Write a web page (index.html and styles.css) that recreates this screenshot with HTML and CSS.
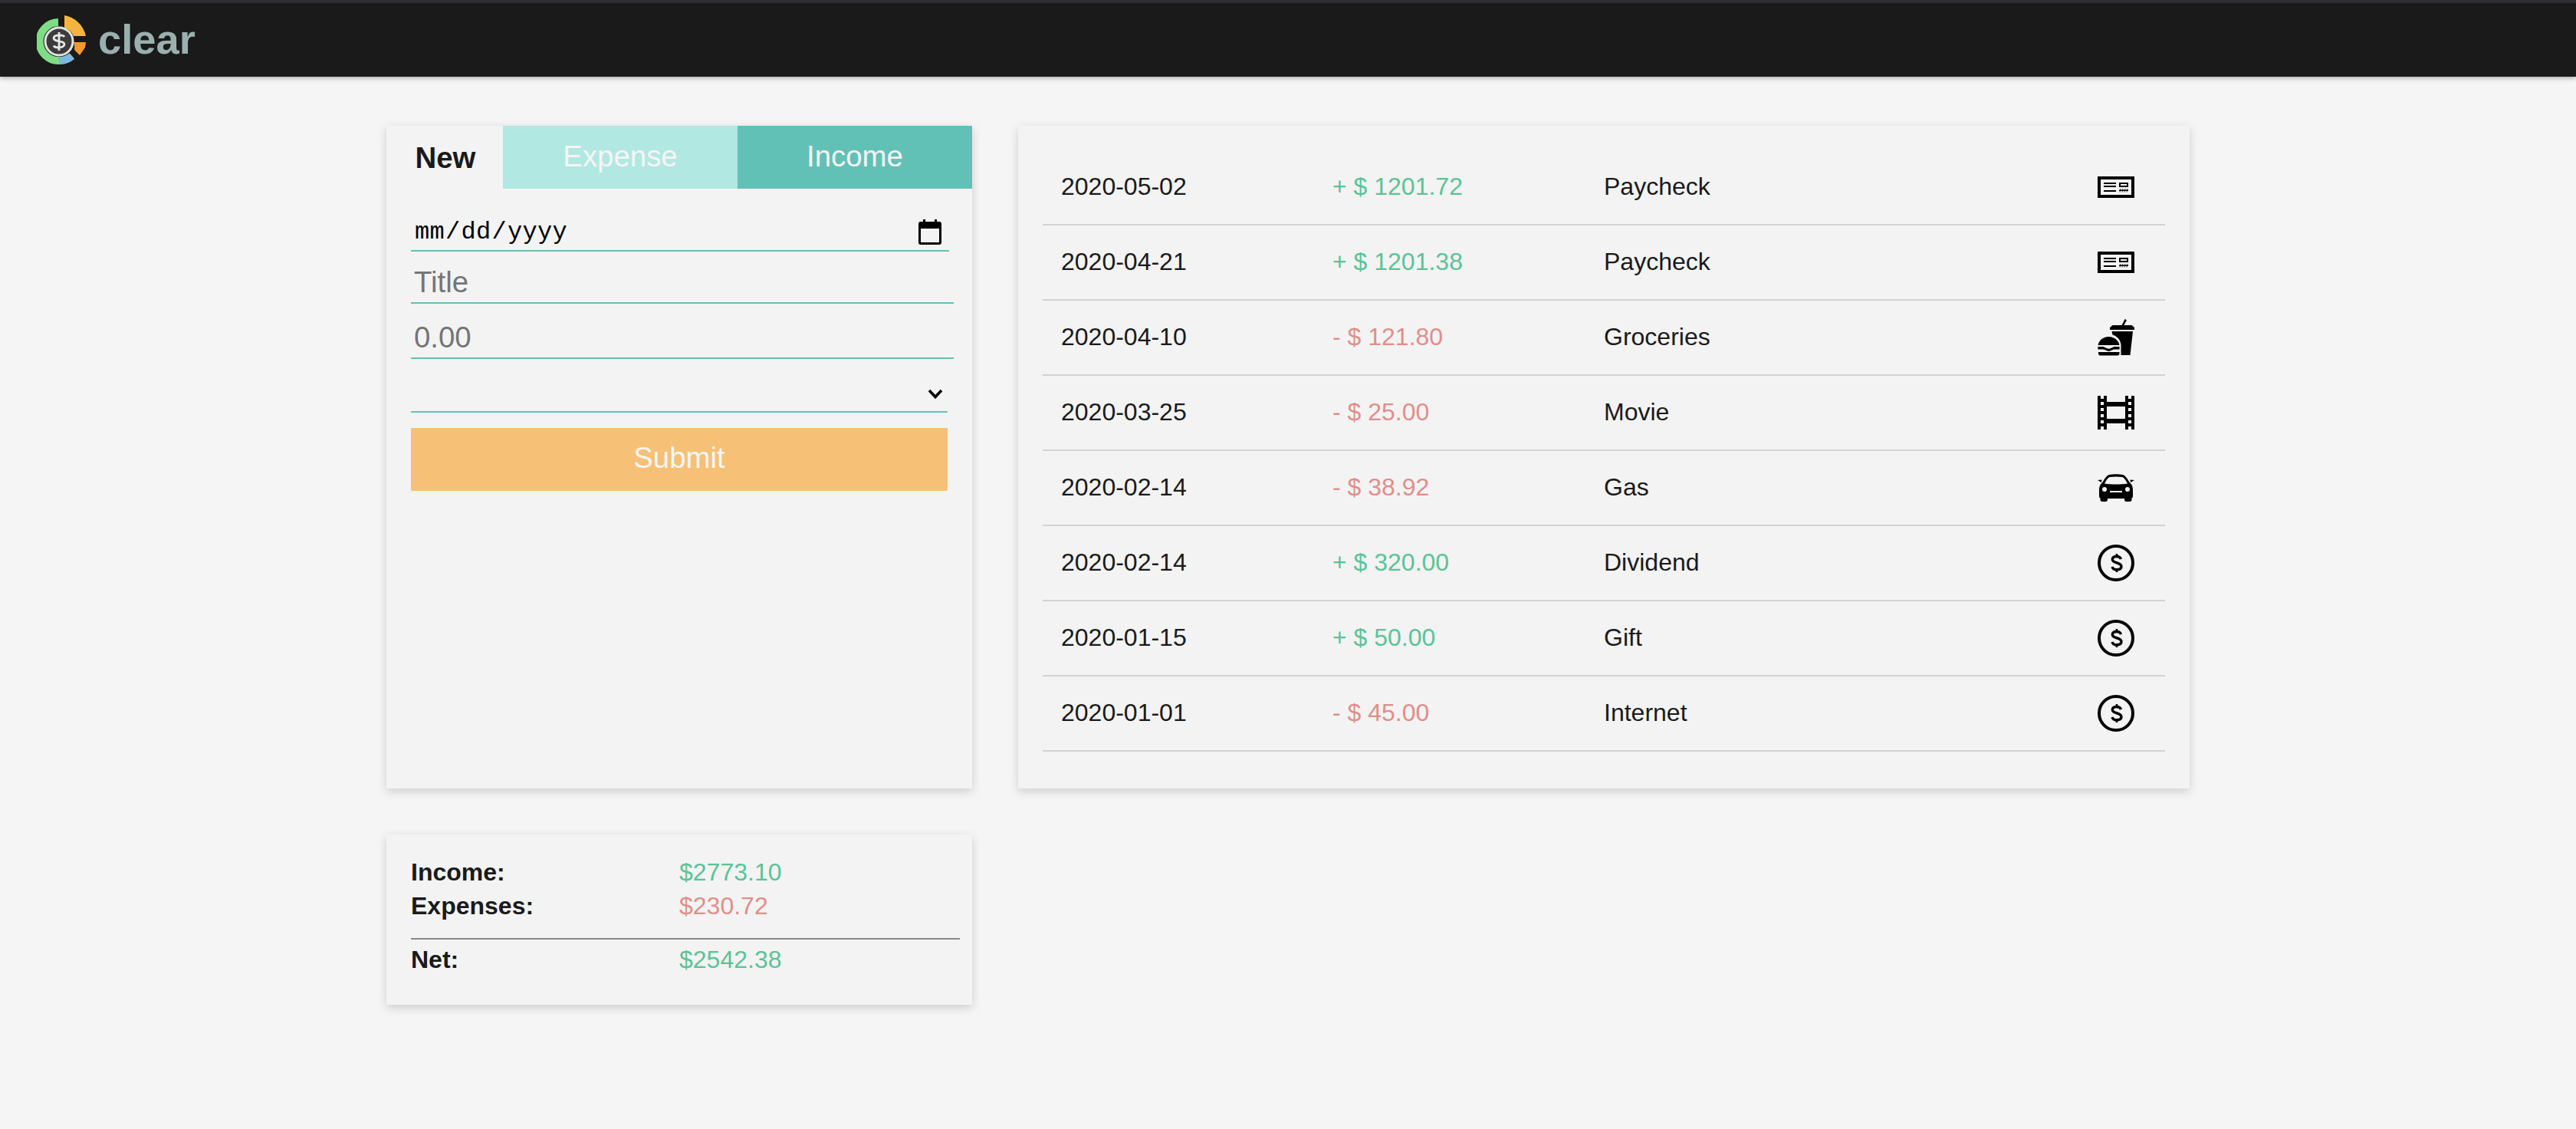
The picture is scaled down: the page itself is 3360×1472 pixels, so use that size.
FILE: index.html
```html
<!DOCTYPE html>
<html lang="en">
<head>
<meta charset="utf-8">
<title>clear</title>
<link rel="stylesheet" href="styles.css">
</head>
<body>
<svg class="sprites" width="0" height="0" aria-hidden="true">
  <symbol id="i-check" viewBox="0 0 48 28">
    <path fill-rule="evenodd" d="M0 0H48V28H0ZM4 4V24H44V4Z"/>
    <path d="M8 8H24V10H8ZM8 12H24V14H8ZM8 18H24V20H8Z"/>
    <path fill-rule="evenodd" d="M28 8H40V14H28ZM30 10V12H38V10Z"/>
    <path d="M28 17.500H40V19H28Z"/>
    <path d="M30 16L29 20.500M33 16L32 20.500M36 16L35 20.500M39 16L38 20.500" stroke="#000" stroke-width=".8" fill="none"/>
  </symbol>
  <symbol id="i-food" viewBox="0 0 48 48">
    <path d="M31.500 8L35.600 0L38 1.200L34.400 8H44.500L48 11V14H16V11L19.500 8Z"/>
    <path d="M18.500 16H46L42.500 47H30.500V38C31.500 29 27 23 19.500 20.500Z"/>
    <path d="M14.500 23C22 23 27.500 28 28.500 34H.6C1.500 28 7 23 14.500 23Z"/>
    <path d="M.4 36H7C9 36 12 38.800 14.500 38.800C17 38.800 20 36 22 36H28.600V39.500H22C19 39.500 17 42 14.500 42C12 42 10 39.500 7 39.500H.4Z"/>
    <path d="M1 43H28.500V45C28.500 46.500 27.500 47.500 26 47.500H3.500C2 47.500 1 46.500 1 45Z"/>
  </symbol>
  <symbol id="i-film" viewBox="0 0 48 44">
    <path fill-rule="evenodd" d="M0 0H4V4H8V0H12V8H36V0H40V4H44V0H48V44H44V40H40V44H36V36H12V44H8V40H4V44H0ZM4 8V12H8V8ZM4 16V20H8V16ZM4 24V28H8V24ZM4 32V36H8V32ZM40 8V12H44V8ZM40 16V20H44V16ZM40 24V28H44V24ZM40 32V36H44V32ZM12 14V30H36V14Z"/>
  </symbol>
  <symbol id="i-car" viewBox="0 0 48 36">
    <path fill-rule="evenodd" d="M15 1C20 0 28 0 33 1C36 2 39 6 41 10L44 13.500C45.500 15.500 46 18 46 21V29C46 30 45.500 31 44.500 31.500V33.500C44.500 35 43.500 36 42 36H37.500C36 36 35 35 35 33.500V32H13V33.500C13 35 12 36 10.500 36H6C4.500 36 3.500 35 3.500 33.500V31.500C2.500 31 2 30 2 29V21C2 18 2.500 15.500 4 13.500L7 10C9 6 12 2 15 1ZM15.500 4C13 5.500 10.500 9 9 12.500C18 13.800 30 13.800 39 12.500C37.500 9 35 5.500 32.500 4C27 3.200 21 3.200 15.500 4ZM9 17A3 3 0 1 0 9 23A3 3 0 1 0 9 17ZM39 17A3 3 0 1 0 39 23A3 3 0 1 0 39 17ZM16 22V24H32V22Z"/>
    <path d="M0 8L5.500 7.500L5 11ZM48 8L42.500 7.500L43 11Z"/>
  </symbol>
  <symbol id="i-dollar" viewBox="0 0 48 48">
    <circle cx="24" cy="24" r="22" fill="none" stroke="#000" stroke-width="4"/>
    <path d="M30.500 19C29.800 16.800 27.800 15.500 25 15.500C21.500 15.500 19.300 17 19.300 19.500C19.300 25 31 22.500 31 28.600C31 31.300 28.500 32.800 25 32.800C22 32.800 19.800 31.500 19 29" fill="none" stroke="#000" stroke-width="3.400"/>
    <path d="M25 12V16M25 32V36" stroke="#000" stroke-width="2.600"/>
  </symbol>
</svg>

<header class="topbar">
  <svg class="logo" viewBox="48 20 64 64" width="64" height="64" aria-hidden="true">
    <path d="M76 29A25 25 0 0 0 77 79" fill="none" stroke="#7fdc86" stroke-width="10"/>
    <path d="M77 79A25 25 0 0 0 94 73" fill="none" stroke="#7cb9e0" stroke-width="10"/>
    <path d="M84 20A34.500 34.500 0 0 1 112 47L96 47A20 20 0 0 0 84 36Z" fill="#f4b540"/>
    <path d="M96 55L112 55L111 62L104 72L97 65Q98 60 96 55Z" fill="#f3982f"/>
    <circle cx="77" cy="54" r="18" fill="#3c3c3c" stroke="#e4e4e4" stroke-width="3"/>
    <path d="M84 48C82 45 71 45 70 49.500C70 55 84 52.500 84 58C83 63 72 63 70 59.500M77 42V66" fill="none" stroke="#e8e8e8" stroke-width="2.800"/>
  </svg>
  <span class="brand">clear</span>
</header>

<main class="layout">
  <section class="card entry">
    <div class="tabs">
      <span class="tab tab-title">New</span>
      <span class="tab tab-expense">Expense</span>
      <span class="tab tab-income">Income</span>
    </div>
    <form class="form">
      <input class="field field-date" type="date">
      <input class="field field-text" type="text" placeholder="Title">
      <input class="field field-text field-amount" type="text" placeholder="0.00">
      <select class="field field-select"><option></option></select>
      <button class="submit" type="button">Submit</button>
    </form>
  </section>

  <section class="card ledger">
    <div class="row"><span>2020-05-02</span><span class="pos">+ $ 1201.72</span><span>Paycheck</span><svg class="icon icon-check"><use href="#i-check"/></svg></div>
    <div class="row"><span>2020-04-21</span><span class="pos">+ $ 1201.38</span><span>Paycheck</span><svg class="icon icon-check"><use href="#i-check"/></svg></div>
    <div class="row"><span>2020-04-10</span><span class="neg">- $ 121.80</span><span>Groceries</span><svg class="icon icon-food"><use href="#i-food"/></svg></div>
    <div class="row"><span>2020-03-25</span><span class="neg">- $ 25.00</span><span>Movie</span><svg class="icon icon-film"><use href="#i-film"/></svg></div>
    <div class="row"><span>2020-02-14</span><span class="neg">- $ 38.92</span><span>Gas</span><svg class="icon icon-car"><use href="#i-car"/></svg></div>
    <div class="row"><span>2020-02-14</span><span class="pos">+ $ 320.00</span><span>Dividend</span><svg class="icon icon-dollar"><use href="#i-dollar"/></svg></div>
    <div class="row"><span>2020-01-15</span><span class="pos">+ $ 50.00</span><span>Gift</span><svg class="icon icon-dollar"><use href="#i-dollar"/></svg></div>
    <div class="row"><span>2020-01-01</span><span class="neg">- $ 45.00</span><span>Internet</span><svg class="icon icon-dollar"><use href="#i-dollar"/></svg></div>
  </section>

  <section class="card summary">
    <div class="sum-row"><strong>Income:</strong><span class="pos">$2773.10</span></div>
    <div class="sum-row"><strong>Expenses:</strong><span class="neg">$230.72</span></div>
    <hr class="sum-rule">
    <div class="sum-row"><strong>Net:</strong><span class="pos">$2542.38</span></div>
  </section>
</main>
</body>
</html>
```
FILE: styles.css
```css
* { box-sizing: border-box; }
html, body { margin: 0; }
body {
  min-height: 1472px;
  background: #f5f5f5;
  color: #1a1a1a;
  font-family: "Liberation Sans", Arial, sans-serif;
  font-size: 32px;
}
.sprites { display: block; height: 0; width: 0; overflow: hidden; }

.topbar {
  height: 100px;
  display: flex;
  align-items: center;
  gap: 16px;
  padding: 4px 0 0 48px;
  background: #1a1a1a;
  border-top: 4px solid #2d2d32;
  box-shadow: 0 2px 6px rgba(0, 0, 0, .3);
}
.logo { display: block; filter: blur(.7px); margin-top: -4px; }
.brand { color: #9ab0ae; font-size: 54.4px; font-weight: 700; margin-top: -6px; }

.layout {
  width: 2352px;
  margin: 64px auto 0;
  display: grid;
  grid-template-columns: 764px 1fr;
  grid-template-rows: 864px auto;
  gap: 60px;
}
.card {
  background: #f3f3f3;
  box-shadow: 0 4px 12px rgba(0, 0, 0, .16);
}

.tabs { display: flex; height: 82px; }
.tab {
  display: flex;
  align-items: center;
  justify-content: center;
  font-size: 38.4px;
  padding-bottom: 2px;
}
.tab-title { width: 152px; padding: 2px 0 0 2px; font-weight: 700; }
.tab-expense { width: 306px; background: #b1e8e2; color: #f5f5f5; }
.tab-income { width: 306px; background: #62c1b6; color: #f5f5f5; }

.form { display: flex; flex-direction: column; align-items: flex-start; padding: 0 32px; }
.field {
  display: block;
  border: 0;
  border-bottom: 2px solid #62c1b6;
  border-radius: 0;
  background: transparent;
  outline: 0;
  margin: 0;
  color: #000;
}
.field-date {
  width: 702px;
  height: 62px;
  margin-top: 20px;
  padding: 12px 4px 0;
  font-family: "Liberation Mono", monospace;
  font-size: 32px;
  letter-spacing: .3px;
}
.field-date::-webkit-calendar-picker-indicator {
  width: 30px;
  height: 33px;
  padding: 0;
  margin: 0 6px 0 0;
  background: url("data:image/svg+xml,%3Csvg xmlns='http://www.w3.org/2000/svg' viewBox='0 0 30 33'%3E%3Cpath fill-rule='evenodd' d='M3 3H6V0H9V3H21V0H24V3H27Q30 3 30 6V30Q30 33 27 33H3Q0 33 0 30V6Q0 3 3 3ZM3 12V30H27V12Z'/%3E%3C/svg%3E") center / 30px 33px no-repeat;
}
.field-text {
  width: 708px;
  height: 58px;
  margin-top: 10px;
  padding: 4px 4px 0;
  font-family: "Liberation Sans", Arial, sans-serif;
  font-size: 38.4px;
}
.field-text::placeholder { color: #757575; opacity: 1; }
.field-amount { margin-top: 14px; }
.field-select {
  width: 700px;
  height: 70px;
  font-size: 32px;
  font-family: "Liberation Sans", Arial, sans-serif;
  appearance: none;
  background: url("data:image/svg+xml,%3Csvg xmlns='http://www.w3.org/2000/svg' viewBox='0 0 20 13'%3E%3Cpath d='M2 2L10 10.500L18 2' fill='none' stroke='%23000' stroke-width='3.600'/%3E%3C/svg%3E") right 6px top 39px / 20px 13px no-repeat;
}
.submit {
  width: 700px;
  height: 82px;
  margin-top: 20px;
  border: 0;
  padding: 0 0 4px;
  background: #f6c176;
  color: #f5f5f5;
  font-family: "Liberation Sans", Arial, sans-serif;
  font-size: 38.4px;
}

.ledger { padding: 32px 32px 0; }
.row {
  display: grid;
  grid-template-columns: 354px 354px 1fr 48px;
  align-items: center;
  height: 98px;
  padding: 0 40px 2px 24px;
  border-bottom: 2px solid #d2d2d2;
}
.pos { color: #5bc396; }
.neg { color: #e08e8a; }
.icon { display: block; width: 48px; margin-top: 2px; fill: #000; }
.icon-check { height: 28px; }
.icon-food, .icon-dollar { height: 48px; }
.icon-film { height: 44px; }
.icon-car { height: 36px; }

.summary {
  grid-column: 1;
  height: 222px;
  padding: 27px 16px 0 32px;
}
.sum-row {
  display: grid;
  grid-template-columns: 350px 1fr;
  height: 44px;
  line-height: 44px;
}
.sum-rule {
  height: 2px;
  border: 0;
  margin: 20px 0 4px;
  background: #888;
}
```
